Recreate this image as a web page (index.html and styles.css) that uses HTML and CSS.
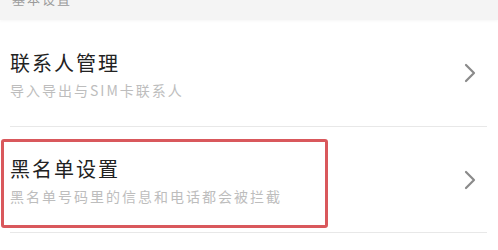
FILE: index.html
```html
<!DOCTYPE html>
<html lang="zh">
<head>
<meta charset="UTF-8">
<title>设置</title>
<link rel="stylesheet" href="styles.css">
</head>
<body>
  <div class="group-head">
    <span class="group-title">基本设置</span>
  </div>

  <div class="row">
    <div class="row-text">
      <div class="row-title">联系人管理</div>
      <div class="row-sub">导入导出与SIM卡联系人</div>
    </div>
    <svg class="chevron" width="12" height="20" viewBox="0 0 12 20">
      <path d="M2 2 L10 10 L2 18" fill="none" stroke="#8a8a8a" stroke-width="2.2" stroke-linecap="round" stroke-linejoin="round"/>
    </svg>
  </div>

  <div class="row marked">
    <div class="row-text">
      <div class="row-title">黑名单设置</div>
      <div class="row-sub">黑名单号码里的信息和电话都会被拦截</div>
    </div>
    <svg class="chevron" width="12" height="20" viewBox="0 0 12 20">
      <path d="M2 2 L10 10 L2 18" fill="none" stroke="#8a8a8a" stroke-width="2.2" stroke-linecap="round" stroke-linejoin="round"/>
    </svg>
    <div class="highlight"></div>
  </div>
</body>
</html>
```

FILE: styles.css
```css
body {
  margin: 0;
  background-color: #fff;
  font-family: "Noto Sans CJK SC", "Noto Sans", sans-serif;
}
/* grey group header, scrolled half out of view */
.group-head {
  height: 20px;
  overflow: hidden;
  background-color: #f4f4f4;
  box-shadow: 0 1px 3px rgba(0, 0, 0, 0.04);
  padding-left: 12px;
}
.group-title {
  display: block;
  margin-top: -10px;
  font-size: 13px;
  line-height: 18px;
  letter-spacing: 2px;
  color: #9a9a9a;
}
.row {
  display: flex;
  align-items: center;
  height: 106px;
  margin: 0 11px 0 10px;
  border-bottom: 1px solid #e8e8e8;
}
.row.marked {
  position: relative;
  height: 105px;
}
.row-text {
  flex: 1;
  padding-top: 3px;
}
.row-title {
  font-size: 20px;
  line-height: 24px;
  letter-spacing: 2px;
  color: #222;
}
.row-sub {
  margin-top: 6px;
  font-size: 14px;
  line-height: 18px;
  letter-spacing: 2px;
  color: #bdbdbd;
}
.chevron {
  margin-right: 11px;
}
/* red annotation box drawn over the row */
.highlight {
  position: absolute;
  left: -9px;
  top: 12px;
  width: 321px;
  height: 83px;
  border: 3.5px solid #d9585c;
  border-radius: 3px;
}
```
